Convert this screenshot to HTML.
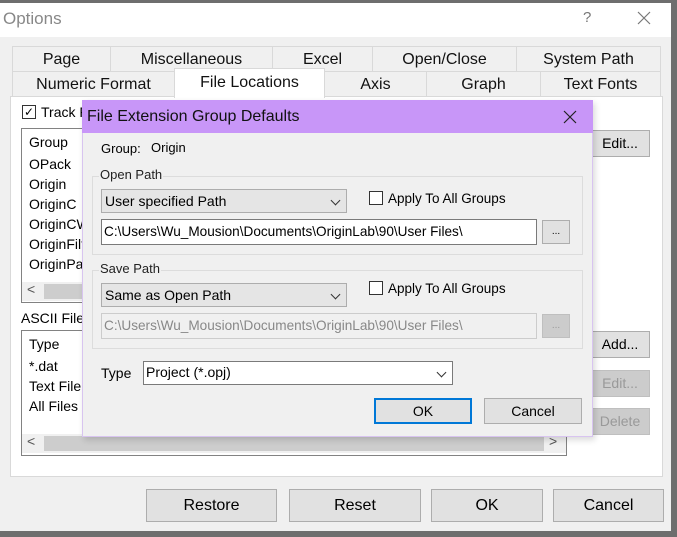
<!DOCTYPE html>
<html><head><style>
*{box-sizing:border-box;margin:0;padding:0}
body{width:677px;height:537px;overflow:hidden;background:#6e6e6e;position:relative;font-family:"Liberation Sans",sans-serif;font-size:14px;color:#000}
.a{position:absolute}
.win{left:0;top:3px;width:671px;height:528px;background:#f0f0f0}
.tb{left:0;top:3px;width:671px;height:34px;background:#fff}
.tab{position:absolute;height:26px;border:1px solid #d9d9d9;background:#f0f0f0;text-align:center;font-size:16px;line-height:25px;color:#111}
.btn{position:absolute;background:#e1e1e1;border:1px solid #adadad;text-align:center;font-size:14px}
.lb{position:absolute;background:#fff;border:1px solid #828282}
.li{position:absolute;font-size:14px}
.chk{position:absolute;width:14px;height:14px;border:1px solid #333;background:#fff}
.sb{position:absolute;height:19px;background:#f0f0f0}
.grp{position:absolute;border:1px solid #dcdcdc}
.gl{position:absolute;background:#f0f0f0;font-size:13px;padding:0 1px;color:#222}
.cb{position:absolute;background:#e5e5e5;border:1px solid #adadad;font-size:14px;padding-left:3px;line-height:22px}
.tf{position:absolute;background:#fff;border:1px solid #7a7a7a;font-size:13.6px;padding-left:2px;line-height:23px}
.chev{position:absolute;right:7px;top:7px;width:7px;height:7px;border-right:1px solid #333;border-bottom:1px solid #333;transform:rotate(45deg)}
</style></head><body>
<div class="a win"></div>
<div class="a tb"></div>
<div class="a" style="left:3px;top:9px;font-size:17px;color:#888">Options</div>
<div class="a" style="left:583px;top:9px;font-size:15px;color:#777">?</div>
<svg class="a" style="left:637px;top:11px" width="14" height="14"><path d="M1 1L13 13M13 1L1 13" stroke="#777" stroke-width="1.2"/></svg>

<div class="a" style="left:10px;top:96px;width:653px;height:381px;background:#fff;border:1px solid #d9d9d9"></div>
<div class="tab" style="left:12px;top:46px;width:99px">Page</div>
<div class="tab" style="left:110px;top:46px;width:163px">Miscellaneous</div>
<div class="tab" style="left:272px;top:46px;width:101px">Excel</div>
<div class="tab" style="left:372px;top:46px;width:145px">Open/Close</div>
<div class="tab" style="left:516px;top:46px;width:145px">System Path</div>
<div class="tab" style="left:12px;top:71px;width:163px">Numeric Format</div>
<div class="tab" style="left:324px;top:71px;width:103px">Axis</div>
<div class="tab" style="left:426px;top:71px;width:115px">Graph</div>
<div class="tab" style="left:540px;top:71px;width:121px">Text Fonts</div>
<div class="tab" style="left:174px;top:68px;width:151px;height:30px;background:#fff;border-bottom:none;line-height:28px">File Locations</div>

<div class="chk" style="left:22px;top:105px;border-color:#333;text-align:center;font-size:12px;line-height:12px">✓</div>
<div class="a" style="left:41px;top:104px;font-size:14px">Track F</div>
<div class="lb" style="left:21px;top:128px;width:120px;height:175px"></div>
<div class="li" style="left:29px;top:134px">Group</div>
<div class="li" style="left:29px;top:156px">OPack</div>
<div class="li" style="left:29px;top:176px">Origin</div>
<div class="li" style="left:29px;top:196px">OriginC</div>
<div class="li" style="left:29px;top:216px">OriginCW</div>
<div class="li" style="left:29px;top:236px">OriginFilt</div>
<div class="li" style="left:29px;top:256px">OriginPa</div>
<div class="sb" style="left:22px;top:282px;width:118px"></div>
<div class="a" style="left:44px;top:284px;width:40px;height:15px;background:#cdcdcd"></div>
<div class="a" style="left:27px;top:281px;font-size:14px;color:#555">&lt;</div>
<div class="btn" style="left:590px;top:130px;width:60px;height:27px;line-height:25px">Edit...</div>
<div class="a" style="left:21px;top:310px;font-size:14px">ASCII File</div>
<div class="lb" style="left:21px;top:330px;width:546px;height:126px"></div>
<div class="li" style="left:29px;top:336px">Type</div>
<div class="li" style="left:29px;top:358px">*.dat</div>
<div class="li" style="left:29px;top:378px">Text File</div>
<div class="li" style="left:29px;top:398px">All Files (</div>
<div class="sb" style="left:22px;top:434px;width:544px"></div>
<div class="a" style="left:44px;top:436px;width:500px;height:15px;background:#cdcdcd"></div>
<div class="a" style="left:27px;top:433px;font-size:14px;color:#555">&lt;</div>
<div class="a" style="left:549px;top:433px;font-size:14px;color:#555">&gt;</div>
<div class="btn" style="left:590px;top:331px;width:60px;height:27px;line-height:25px">Add...</div>
<div class="btn" style="left:590px;top:370px;width:60px;height:27px;line-height:25px;color:#999;background:#ccc;border-color:#bfbfbf">Edit...</div>
<div class="btn" style="left:590px;top:408px;width:60px;height:27px;line-height:25px;color:#999;background:#ccc;border-color:#bfbfbf">Delete</div>

<div class="btn" style="left:146px;top:489px;width:131px;height:33px;line-height:31px;font-size:16px">Restore</div>
<div class="btn" style="left:289px;top:489px;width:132px;height:33px;line-height:31px;font-size:16px">Reset</div>
<div class="btn" style="left:431px;top:489px;width:112px;height:33px;line-height:31px;font-size:16px">OK</div>
<div class="btn" style="left:553px;top:489px;width:111px;height:33px;line-height:31px;font-size:16px">Cancel</div>

<!-- dialog -->
<div class="a" style="left:82px;top:100px;width:511px;height:337px;background:#f0f0f0;border:1px solid #d8c4f0;box-shadow:2px 3px 6px rgba(0,0,0,0.15)"></div>
<div class="a" style="left:82px;top:100px;width:511px;height:33px;background:#c896f8"></div>
<div class="a" style="left:87px;top:108px;font-size:16px;color:#111">File Extension Group Defaults</div>
<svg class="a" style="left:563px;top:110px" width="14" height="14"><path d="M1 1L13 13M13 1L1 13" stroke="#222" stroke-width="1.2"/></svg>
<div class="a" style="left:101px;top:141px;font-size:13px">Group:</div>
<div class="a" style="left:151px;top:140px;font-size:13px">Origin</div>

<div class="grp" style="left:92px;top:176px;width:491px;height:79px"></div>
<div class="gl" style="left:99px;top:167px">Open Path</div>
<div class="cb" style="left:101px;top:189px;width:246px;height:24px">User specified Path<div class="chev"></div></div>
<div class="chk" style="left:369px;top:191px"></div>
<div class="a" style="left:388px;top:191px;font-size:13.5px">Apply To All Groups</div>
<div class="tf" style="left:101px;top:219px;width:436px;height:26px">C:\Users\Wu_Mousion\Documents\OriginLab\90\User Files\</div>
<div class="btn" style="left:542px;top:220px;width:28px;height:24px;font-size:10px;line-height:22px">...</div>

<div class="grp" style="left:92px;top:270px;width:491px;height:79px"></div>
<div class="gl" style="left:99px;top:261px">Save Path</div>
<div class="cb" style="left:101px;top:283px;width:246px;height:24px">Same as Open Path<div class="chev"></div></div>
<div class="chk" style="left:369px;top:281px"></div>
<div class="a" style="left:388px;top:281px;font-size:13.5px">Apply To All Groups</div>
<div class="tf" style="left:101px;top:313px;width:436px;height:26px;background:#f0f0f0;border-color:#ccc;color:#888">C:\Users\Wu_Mousion\Documents\OriginLab\90\User Files\</div>
<div class="btn" style="left:542px;top:314px;width:28px;height:24px;font-size:10px;line-height:22px;background:#ccc;border-color:#bfbfbf;color:#999">...</div>

<div class="a" style="left:101px;top:365px;font-size:14px">Type</div>
<div class="tf" style="left:143px;top:361px;width:310px;height:24px;border-color:#7a7a7a;font-size:14px;line-height:21px">Project (*.opj)<div class="chev"></div></div>
<div class="btn" style="left:374px;top:398px;width:98px;height:26px;line-height:22px;border:2px solid #0078d7;font-size:14px">OK</div>
<div class="btn" style="left:484px;top:398px;width:98px;height:26px;line-height:24px;font-size:14px">Cancel</div>
</body></html>
